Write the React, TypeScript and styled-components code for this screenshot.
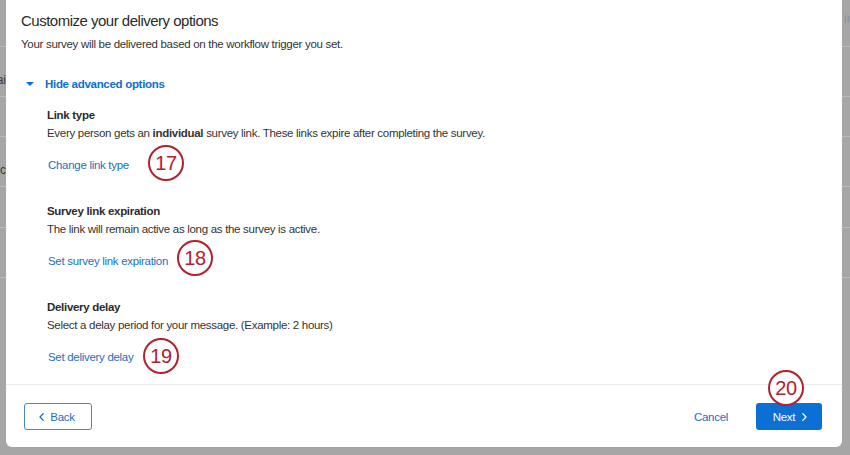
import React from "react";
import styled, { createGlobalStyle } from "styled-components";

const GlobalStyle = createGlobalStyle`
  html, body { margin: 0; padding: 0; }
  body {
    font-family: "Liberation Sans", Arial, sans-serif;
    background: #a6a6a6;
  }
`;

const Screen = styled.div`
  position: relative;
  width: 850px;
  height: 455px;
  overflow: hidden;
  background: #a6a6a6;
`;

const BackdropTable = styled.div`
  display: flex;
  flex-direction: column;
`;

const BackdropRow = styled.div<{ $h: number }>`
  height: ${(p) => p.$h}px;
  border-bottom: 1px solid #b9b9b9;
  box-sizing: border-box;
  display: flex;
  justify-content: space-between;
  align-items: flex-end;
  font-size: 12px;
  color: #3a3a3a;
`;

const EdgeText = styled.span<{ $right?: boolean; $pad: number }>`
  width: 6px;
  overflow: hidden;
  white-space: nowrap;
  direction: ${(p) => (p.$right ? "ltr" : "rtl")};
  padding-bottom: ${(p) => p.$pad}px;
  color: ${(p) => (p.$right ? "#8593ab" : "#3a3a3a")};
  margin-left: ${(p) => (p.$right ? "auto" : "0")};
  ${(p) => (p.$right ? "padding-left: 2px;" : "")}
`;

const Modal = styled.div`
  position: absolute;
  left: 6px;
  top: 0;
  width: 836px;
  height: 447px;
  background: #ffffff;
  border-radius: 0 0 6px 6px;
  display: flex;
  flex-direction: column;
  box-sizing: border-box;
`;

const Body = styled.div`
  flex: 1;
  padding: 11px 15px 0 15px;
  display: flex;
  flex-direction: column;
`;

const Title = styled.h1`
  margin: 0;
  font-size: 15px;
  line-height: 20px;
  font-weight: 400;
  letter-spacing: -0.5px;
  color: #2b2b2b;
`;

const Subtitle = styled.p`
  margin: 5px 0 0;
  font-size: 11.5px;
  line-height: 16px;
  letter-spacing: -0.3px;
  color: #333;
`;

const Toggle = styled.button`
  margin: 24px 0 0 5px;
  padding: 0;
  border: none;
  background: none;
  display: flex;
  align-items: center;
  gap: 11px;
  font-family: inherit;
  font-size: 11.5px;
  line-height: 16px;
  font-weight: 700;
  letter-spacing: -0.3px;
  color: #0b6ed3;
  cursor: pointer;
`;

const Caret = styled.span`
  width: 0;
  height: 0;
  border-left: 4px solid transparent;
  border-right: 4px solid transparent;
  border-top: 4px solid #0b6ed3;
`;

const Sections = styled.div`
  margin-top: 15px;
  padding-left: 26px;
  display: flex;
  flex-direction: column;
  gap: 30px;
`;

const Section = styled.section`
  display: flex;
  flex-direction: column;
`;

const Heading = styled.h2`
  margin: 0;
  font-size: 11.5px;
  line-height: 16px;
  font-weight: 700;
  letter-spacing: -0.3px;
  color: #2b2b2b;
`;

const Desc = styled.p`
  margin: 2px 0 0;
  font-size: 11.5px;
  line-height: 16px;
  letter-spacing: -0.3px;
  color: #333;
  b { font-weight: 700; }
`;

const LinkText = styled.a`
  margin-top: 16px;
  font-size: 11.5px;
  line-height: 16px;
  letter-spacing: -0.3px;
  color: #1a6fc4;
  text-decoration: none;
  align-self: flex-start;
  padding-left: 1px;
`;

const Footer = styled.div`
  border-top: 1px solid #ebebeb;
  padding: 18px 20px 17px 18px;
  display: flex;
  align-items: center;
`;

const OutlineButton = styled.button`
  height: 27px;
  width: 68px;
  border: 1px solid #4a86cc;
  border-radius: 3px;
  background: #fff;
  color: #1a6fc4;
  font-family: inherit;
  font-size: 11.5px;
  letter-spacing: -0.3px;
  display: flex;
  align-items: center;
  justify-content: center;
  gap: 6px;
  padding: 0 2px 0 0;
  box-sizing: border-box;
`;

const TextButton = styled.button`
  margin-left: auto;
  margin-right: 28px;
  border: none;
  background: none;
  padding: 0;
  color: #1a6fc4;
  font-family: inherit;
  font-size: 11.5px;
  letter-spacing: -0.3px;
`;

const PrimaryButton = styled.button`
  height: 27px;
  width: 66px;
  border: none;
  border-radius: 3px;
  background: #0b6fd3;
  color: #fff;
  font-family: inherit;
  font-size: 11.5px;
  letter-spacing: -0.3px;
  display: flex;
  align-items: center;
  justify-content: center;
  gap: 7px;
  padding: 0 0 0 2px;
  box-sizing: border-box;
`;

const Callout = styled.div<{ $x: number; $y: number }>`
  position: absolute;
  left: ${(p) => p.$x - 18}px;
  top: ${(p) => p.$y - 18}px;
  width: 36px;
  height: 36px;
  border: 2.5px solid #b3202e;
  border-radius: 50%;
  box-sizing: border-box;
  background: #fff;
  color: #b3202e;
  font-family: "Liberation Sans", Arial, sans-serif;
  font-size: 20px;
  letter-spacing: -0.3px;
  display: flex;
  align-items: center;
  justify-content: center;
`;

const Chevron = ({ dir }: { dir: "left" | "right" }) => (
  <svg width="5" height="8" viewBox="0 0 5 8" fill="none">
    <path
      d={dir === "left" ? "M4.2 0.6 L1 4 L4.2 7.4" : "M0.8 0.6 L4 4 L0.8 7.4"}
      stroke="currentColor"
      strokeWidth="1.3"
      strokeLinecap="round"
      strokeLinejoin="round"
    />
  </svg>
);

const rows = [
  { h: 47, left: "", right: "ir", rp: 20 },
  { h: 50, left: "ai", right: "", rp: 9 },
  { h: 40, left: "", right: "", rp: 0 },
  { h: 50, left: "c", right: "", rp: 8 },
  { h: 41, left: "", right: "", rp: 0 },
  { h: 50, left: "", right: "", rp: 0 },
];

const sections = [
  {
    heading: "Link type",
    desc: (
      <>
        Every person gets an <b>individual</b> survey link. These links expire after completing the survey.
      </>
    ),
    link: "Change link type",
  },
  {
    heading: "Survey link expiration",
    desc: <>The link will remain active as long as the survey is active.</>,
    link: "Set survey link expiration",
  },
  {
    heading: "Delivery delay",
    desc: <>Select a delay period for your message. (Example: 2 hours)</>,
    link: "Set delivery delay",
  },
];

const callouts = [
  { n: 17, x: 166, y: 163 },
  { n: 18, x: 195, y: 258 },
  { n: 19, x: 161, y: 356 },
  { n: 20, x: 786, y: 388 },
];

export default function App() {
  return (
    <>
      <GlobalStyle />
      <Screen>
        <BackdropTable>
          {rows.map((r, i) => (
            <BackdropRow key={i} $h={r.h}>
              <EdgeText $pad={r.left ? 9 : 0}>{r.left}</EdgeText>
              <EdgeText $right $pad={r.rp}>{r.right}</EdgeText>
            </BackdropRow>
          ))}
        </BackdropTable>
        <Modal>
          <Body>
            <Title>Customize your delivery options</Title>
            <Subtitle>Your survey will be delivered based on the workflow trigger you set.</Subtitle>
            <Toggle>
              <Caret />
              Hide advanced options
            </Toggle>
            <Sections>
              {sections.map((s) => (
                <Section key={s.heading}>
                  <Heading>{s.heading}</Heading>
                  <Desc>{s.desc}</Desc>
                  <LinkText href="#">{s.link}</LinkText>
                </Section>
              ))}
            </Sections>
          </Body>
          <Footer>
            <OutlineButton>
              <Chevron dir="left" />
              Back
            </OutlineButton>
            <TextButton>Cancel</TextButton>
            <PrimaryButton>
              Next
              <Chevron dir="right" />
            </PrimaryButton>
          </Footer>
        </Modal>
        {callouts.map((c) => (
          <Callout key={c.n} $x={c.x} $y={c.y}>
            {c.n}
          </Callout>
        ))}
      </Screen>
    </>
  );
}
